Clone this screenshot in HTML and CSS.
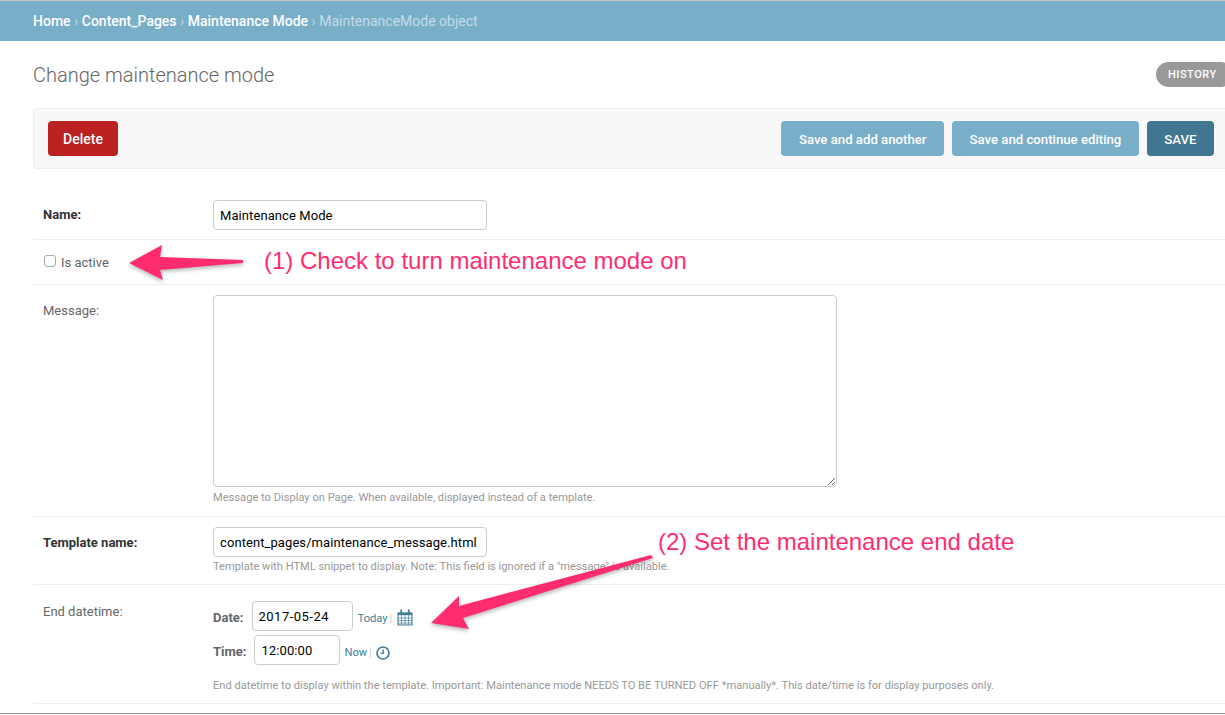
FILE: index.html
```html
<!DOCTYPE html>
<html lang="en">
<head>
    <meta charset="UTF-8">
    <title>Change maintenance mode</title>
    <link rel="stylesheet" href="styles.css">
</head>
<body>
    <div class="breadcrumbs">
        <a href="#">Home</a> <span class="sep">›</span>
        <a href="#">Content_Pages</a> <span class="sep">›</span>
        <a href="#">Maintenance Mode</a> <span class="sep">›</span>
        MaintenanceMode object
    </div>

    <div class="content">
        <div class="title-row">
            <h1>Change maintenance mode</h1>
            <a class="history" href="#">History</a>
        </div>

        <form>
            <div class="submit-row">
                <a class="delete-link" href="#">Delete</a>
                <div class="submit-buttons">
                    <button class="btn" type="button">Save and add another</button>
                    <button class="btn" type="button">Save and continue editing</button>
                    <button class="btn btn-default" type="button">SAVE</button>
                </div>
            </div>

            <div class="form-row row-name">
                <label class="field-label required" for="id_name">Name:</label>
                <div class="field-box">
                    <input class="text-input" type="text" id="id_name" value="Maintenance Mode">
                </div>
            </div>

            <div class="form-row row-check">
                <input class="check" type="checkbox" id="id_is_active">
                <label class="check-label" for="id_is_active">Is active</label>
            </div>

            <div class="form-row">
                <label class="field-label" for="id_message">Message:</label>
                <div class="field-box">
                    <textarea class="message-input" id="id_message"></textarea>
                    <p class="help help-message">Message to Display on Page. When available, displayed instead of a template.</p>
                </div>
            </div>

            <div class="form-row">
                <label class="field-label required" for="id_template">Template name:</label>
                <div class="field-box">
                    <input class="text-input" type="text" id="id_template" value="content_pages/maintenance_message.html">
                    <p class="help help-template">Template with HTML snippet to display. Note: This field is ignored if a "message" is available.</p>
                </div>
            </div>

            <div class="form-row row-datetime">
                <label class="field-label" for="id_date">End datetime:</label>
                <div class="field-box">
                    <div class="date-line">
                        <span class="date-label">Date:</span>
                        <input class="date-input" type="text" id="id_date" value="2017-05-24">
                        <span class="shortcuts"><a href="#">Today</a> <span class="pipe">|</span></span>
                        <svg class="icon icon-calendar" width="16" height="17" viewBox="0 0 16 17">
                            <path d="M1 4h14v12H1z" fill="none" stroke="#447e9b" stroke-width="1.1"/>
                            <path d="M1 3.6h14v2.6H1z" fill="#447e9b"/>
                            <path d="M1 9h14M1 11.5h14M1 14h14M4.5 6v10M8 6v10M11.5 6v10" stroke="#447e9b" stroke-width=".7"/>
                            <path d="M4.2 1.2v3M11.8 1.2v3" stroke="#447e9b" stroke-width="1.8" stroke-linecap="round"/>
                        </svg>
                    </div>
                    <div class="date-line time-line">
                        <span class="date-label">Time:</span>
                        <input class="time-input" type="text" id="id_time" value="12:00:00">
                        <span class="shortcuts"><a href="#">Now</a> <span class="pipe">|</span></span>
                        <svg class="icon icon-clock" width="14" height="14" viewBox="0 0 14 14">
                            <circle cx="7" cy="7" r="6" fill="none" stroke="#447e9b" stroke-width="1.7"/>
                            <path d="M7.2 3.4v4H4.6" fill="none" stroke="#447e9b" stroke-width="1.4"/>
                        </svg>
                    </div>
                    <p class="help help-datetime">End datetime to display within the template. Important: Maintenance mode NEEDS TO BE TURNED OFF *manually*. This date/time is for display purposes only.</p>
                </div>
            </div>
        </form>
    </div>

    <!-- screenshot annotations on top of the form -->
    <svg class="arrows" width="1225" height="715" viewBox="0 0 1225 715">
        <path class="arrow" d="M129 263 L162 245 L160 257 L243 260 L243 263 L160 270 L163 280 Z"/>
        <path class="arrow" d="M431 623 L459 596 L459 606 L651 555 L653 558 L463 618 L469 629 Z"/>
    </svg>
    <div class="note note-one">(1) Check to turn maintenance mode on</div>
    <div class="note note-two">(2) Set the maintenance end date</div>
    <div class="window-edge"></div>
</body>
</html>
```

FILE: styles.css
```css
html,
body {
    height: 715px;
    overflow: hidden;
}

body {
    position: relative;
    margin: 0;
    background-color: #fff;
    font-family: Roboto, "Liberation Sans", sans-serif;
    font-size: 14px;
    color: #333;
}

a {
    text-decoration: none;
}

.breadcrumbs {
    height: 40px;
    line-height: 40px;
    padding-left: 33px;
    background-color: #79aec8;
    border-top: 1px solid #c4c4c4;
    color: #c4dce8;
    font-size: 14px;
    white-space: nowrap;
}

.breadcrumbs a {
    color: #fff;
    font-weight: 500;
}

.content {
    padding-left: 33px;
}

.title-row {
    display: flex;
    justify-content: space-between;
    align-items: flex-start;
    height: 67px;
}

h1 {
    margin: 21px 0 0;
    font-size: 20px;
    line-height: 26px;
    font-weight: 300;
    color: #666;
}

.history {
    margin-top: 21px;
    margin-right: -8px;
    width: 77px;
    height: 25px;
    line-height: 25px;
    padding-left: 12px;
    box-sizing: border-box;
    border-radius: 13px;
    background-color: #999;
    color: #fff;
    font-size: 11px;
    font-weight: 500;
    letter-spacing: 0.5px;
    text-transform: uppercase;
}

.submit-row {
    display: flex;
    justify-content: space-between;
    align-items: center;
    height: 59px;
    margin-bottom: 21px;
    margin-right: -8px;
    padding: 0 18px 0 14px;
    background-color: #f8f8f8;
    border: 1px solid #eee;
    border-radius: 4px;
}

.delete-link {
    width: 70px;
    height: 34px;
    padding-top: 1px;
    line-height: 35px;
    text-align: center;
    background-color: #ba2121;
    border-radius: 4px;
    color: #fff;
    font-weight: 500;
}

.submit-buttons {
    display: flex;
    gap: 8px;
}

.btn {
    height: 35px;
    padding: 2px 17.5px 0;
    border: none;
    border-radius: 4px;
    background-color: #79aec8;
    color: #fff;
    font-family: inherit;
    font-size: 13.2px;
    font-weight: 500;
}

.btn-default {
    background-color: #417690;
}

.form-row {
    display: flex;
    padding: 10px 0 0 10px;
    border-bottom: 1px solid #eee;
}

.row-name {
    height: 39px;
}

.row-check {
    height: 44px;
    padding-top: 0;
    align-items: center;
}

.row-datetime {
    height: 102px;
    padding-top: 16px;
}

.field-label {
    width: 170px;
    flex-shrink: 0;
    padding-top: 8px;
    font-size: 13px;
    color: #666;
}

.row-name .field-label {
    padding-top: 7px;
}

.row-datetime .field-label {
    padding-top: 3px;
}

.required {
    font-weight: 700;
    color: #333;
}

.check {
    appearance: none;
    box-sizing: border-box;
    width: 12px;
    height: 12px;
    margin: 0 0 2px 1px;
    background-color: #fff;
    border: 1px solid #aaa;
    border-radius: 3px;
}

.check-label {
    margin-left: 5px;
    font-size: 13px;
    color: #666;
}

.text-input,
.date-input,
.time-input,
.message-input {
    box-sizing: border-box;
    display: block;
    margin: 0;
    padding: 0 6px;
    border: 1px solid #ccc;
    border-radius: 4px;
    background-color: #fff;
    font-family: inherit;
    font-size: 13px;
    color: #000;
}

.text-input {
    width: 274px;
    height: 30px;
    letter-spacing: 0.08px;
}

.message-input {
    width: 624px;
    height: 192px;
}

.help {
    margin: 0;
    font-size: 11.13px;
    line-height: 14px;
    color: #999;
}

.help-message {
    margin-top: 4px;
    margin-bottom: 11px;
}

.help-template {
    margin-top: 3px;
    margin-bottom: 10px;
}

.help-datetime {
    margin-top: 14px;
}

.date-line {
    display: flex;
    align-items: center;
    height: 30px;
}

.time-line {
    margin-top: 4px;
}

.date-label {
    padding-top: 2px;
    font-size: 13px;
    font-weight: 700;
    color: #666;
}

.date-input {
    width: 101px;
    height: 30px;
    margin-left: 8px;
    letter-spacing: 0.5px;
}

.time-input {
    width: 86px;
    height: 30px;
    margin-left: 8px;
    letter-spacing: 0.1px;
}

.shortcuts {
    margin-left: 5px;
    padding-top: 4px;
    font-size: 11.2px;
    color: #ccc;
}

.time-line .shortcuts {
    margin-left: 4px;
}

.shortcuts a {
    color: #447e9b;
}

.pipe {
    margin-left: -1px;
}

.icon-calendar {
    margin: 3px 0 0 5px;
}

.icon-clock {
    margin: 6px 0 0 4px;
}

.arrows {
    position: absolute;
    left: 0;
    top: 0;
    pointer-events: none;
}

.arrow {
    fill: #ff2d6f;
    filter: drop-shadow(0 2px 2px rgba(0, 0, 0, 0.3));
}

.note {
    position: absolute;
    font-family: "Liberation Sans", Arial, sans-serif;
    font-size: 24px;
    line-height: 28px;
    color: #ff2d6f;
    white-space: nowrap;
}

.note-one {
    left: 264px;
    top: 247px;
}

.note-two {
    left: 658px;
    top: 528px;
}

.window-edge {
    position: absolute;
    left: 0;
    right: 0;
    top: 713px;
    height: 1px;
    background-color: #8c8c8c;
}
```
